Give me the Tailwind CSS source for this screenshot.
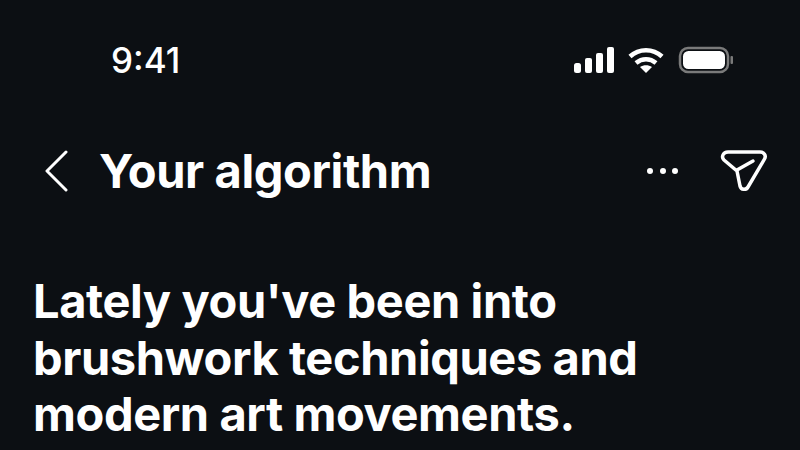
<!DOCTYPE html>
<html><head><meta charset="utf-8"><script src="https://cdn.jsdelivr.net/npm/@tailwindcss/browser@4"></script></head>
<body class="m-0">
<div class="w-[800px] h-[450px] overflow-hidden bg-[#0c0f13] text-white font-['Inter',sans-serif] flex flex-col">
  <div class="h-[120px] pl-[111px] pr-[65px] pt-[40px] flex justify-between items-start">
    <span class="text-[35px] leading-[40px] font-medium">9:41</span>
    <div class="flex items-center gap-[14px] h-[40px]">
      <svg class="-mr-[1px]" width="41" height="27" viewBox="0 0 41 27" fill="#fff"><rect x="0" y="16" width="7" height="10" rx="2.5"/><rect x="11" y="11" width="7" height="15" rx="2"/><rect x="22" y="6" width="7" height="20" rx="2"/><rect x="33" y="0" width="7" height="26" rx="2"/></svg>
      <svg width="36" height="26" viewBox="0 0 36 26" fill="none" stroke="#fff" stroke-width="4.5"><path d="M2 9.5c9-8.5 23-8.5 32 0"/><path d="M8 16c6-5 14-5 20 0"/><path d="M18 26l-6-6c3.500-2.500 8.500-2.500 12 0z" fill="#fff" stroke="none"/></svg>
      <svg width="57" height="28" viewBox="0 0 57 28" fill="none"><rect x="2" y="2" width="48" height="24" rx="8" stroke="#7a7a7a" stroke-width="2.500"/><rect x="5" y="5" width="42" height="18" rx="5.500" fill="#fff"/><rect x="52.500" y="10" width="2.500" height="8" rx="1" fill="#7a7a7a"/></svg>
    </div>
  </div>
  <div class="h-[102px] pl-[44px] pr-[32px] flex items-center justify-between">
    <div class="flex items-center gap-[31px]">
      <svg width="24" height="42" viewBox="0 0 24 42" fill="none" stroke="#fff" stroke-width="3" stroke-linecap="round" stroke-linejoin="round"><path d="M22 2L3 21l19 19"/></svg>
      <span class="text-[47px] leading-[52px] font-bold tracking-[-0.4px]">Your algorithm</span>
    </div>
    <div class="flex items-center gap-[42px]">
      <div class="flex gap-[6.500px]"><span class="w-[6px] h-[6px] rounded-full bg-white"></span><span class="w-[6px] h-[6px] rounded-full bg-white"></span><span class="w-[6px] h-[6px] rounded-full bg-white"></span></div>
      <svg width="48" height="44" viewBox="0 0 48 44" fill="none" stroke="#fff" stroke-width="3.500" stroke-linejoin="round" stroke-linecap="round"><path d="M8 3h32c4 0 6.500 3.500 4.500 7L28 38c-2 3.500-7 3-8-1l-3-15L4 11C1 8 3 3 8 3z"/><path d="M17 21l16-9"/></svg>
    </div>
  </div>
  <div class="pl-[33px] pt-[51px] text-[47px] leading-[56.5px] font-bold tracking-[-0.4px]">
    <div>Lately you've been into</div>
    <div>brushwork techniques and</div>
    <div>modern art movements.</div>
  </div>
</div>
</body></html>
